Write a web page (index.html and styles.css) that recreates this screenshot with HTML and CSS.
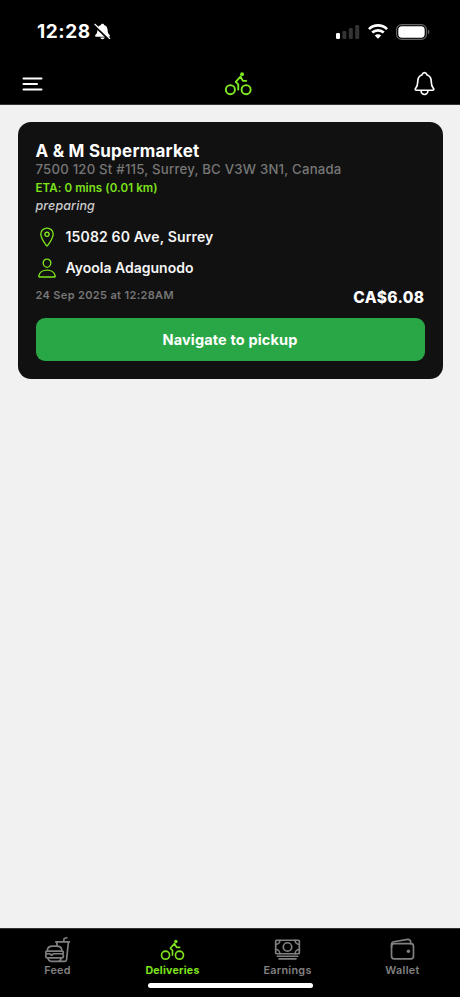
FILE: index.html
```html
<!DOCTYPE html>
<html lang="en">
<head>
<meta charset="utf-8">
<title>Deliveries</title>
<link rel="stylesheet" href="styles.css">
</head>
<body>
<svg class="sprite" width="0" height="0">
  <symbol id="bike" viewBox="0 0 512 512">
    <path d="M388 288a76 76 0 1076 76 76.24 76.24 0 00-76-76zM124 288a76 76 0 1076 76 76.24 76.24 0 00-76-76zM256 360v-86l-42-42 80-88 40 72h56"/>
    <circle class="solid" cx="320" cy="104" r="32"/>
  </symbol>
</svg>
<div class="screen">
  <header class="top">
    <div class="status">
      <span class="time">12:28</span>
      <svg class="muted" viewBox="0 0 18 18"><path d="M9 .8c.9 0 1.5.5 1.7 1.2 2.4.8 3.6 2.6 3.7 5.3.1 2.8.7 3.9 2 5.2.9 1 .5 2-.6 2H2.200c-1.100 0-1.500-1-.6-2 1.300-1.300 1.900-2.400 2-5.200.1-2.700 1.300-4.500 3.700-5.300C7.500 1.300 8.100.8 9 .8zM6.700 15.400h4.600c-.2 1-1.100 1.700-2.300 1.700s-2.100-.7-2.300-1.700z" fill="#fff"/><path d="M.2 2.600l15.600 14.800" stroke="#000" stroke-width="2.200"/><path d="M1 1.300l15.600 15.100" stroke="#fff" stroke-width="1.200" stroke-linecap="round"/></svg>
      <svg class="signal" viewBox="0 0 24 16"><rect y="9" width="4" height="6" rx="1.200" fill="#fff"/><g fill="#333"><rect x="6.400" y="7" width="4" height="8" rx="1.200"/><rect x="12.800" y="4" width="4" height="11" rx="1.200"/><rect x="19.200" y="1" width="4" height="14" rx="1.200"/></g></svg>
      <svg class="wifi" viewBox="0 0 20 15"><g fill="none" stroke="#fff" stroke-width="2.700"><path d="M1 5.100a12.900 12.900 0 0118 0"/><path d="M4.200 8.600a8.400 8.400 0 0111.600 0"/></g><path d="M10 14.800l-3.200-3.300a4.600 4.600 0 016.400 0z" fill="#fff"/></svg>
      <svg class="battery" viewBox="0 0 34 16"><rect x=".6" y=".6" width="29.800" height="14.800" rx="5" fill="none" stroke="#666" stroke-width="1.100"/><rect x="2.300" y="2.300" width="26.400" height="11.400" rx="3.600" fill="#fff"/><path d="M31.800 5.500c2 .7 2 4.300 0 5z" fill="#666"/></svg>
    </div>
    <div class="bar">
      <svg class="menu" viewBox="0 0 20 14"><path d="M1 1.500h18M1 7h13.500M1 12.500h18" stroke="#fff" stroke-width="2" stroke-linecap="round"/></svg>
      <svg class="icon brand"><use href="#bike"/></svg>
      <svg class="icon bell" viewBox="0 0 512 512"><path d="M427.680 351.430C402 320 383.870 304 383.870 217.350 383.870 138 343.350 109.730 310 96c-4.430-1.820-8.600-6-9.950-10.550C294.200 65.540 277.800 48 256 48s-38.210 17.550-44 37.470c-1.350 4.600-5.520 8.710-9.950 10.530-33.390 13.750-73.870 41.920-73.870 121.350C128.130 304 110 320 84.320 351.430 73.680 364.450 83 384 101.610 384h308.880c18.510 0 27.770-19.610 17.190-32.570zM320 384v16a64 64 0 01-128 0v-16"/></svg>
    </div>
  </header>
  <main>
    <article class="card">
      <h1>A &amp; M Supermarket</h1>
      <p class="address">7500 120 St #115, Surrey, BC V3W 3N1, Canada</p>
      <p class="eta">ETA: 0 mins (0.01 km)</p>
      <p class="state">preparing</p>
      <div class="row">
        <svg class="icon" viewBox="0 0 512 512"><path d="M256 48c-79.500 0-144 61.390-144 137 0 87 96 224.870 131.250 272.490a15.770 15.770 0 0025.500 0C304 409.890 400 272.070 400 185c0-75.610-64.500-137-144-137z"/><circle cx="256" cy="192" r="48"/></svg>
        <span class="dropoff">15082 60 Ave, Surrey</span>
      </div>
      <div class="row">
        <svg class="icon" viewBox="0 0 512 512"><path d="M344 144c-3.920 52.870-44 96-88 96s-84.150-43.120-88-96c-4-55 35-96 88-96s92 42 88 96zM256 304c-87 0-175.300 48-191.640 138.600C62.390 453.520 68.570 464 80 464h352c11.440 0 17.620-10.480 15.650-21.400C431.300 352 343 304 256 304z"/></svg>
        <span class="customer">Ayoola Adagunodo</span>
      </div>
      <div class="meta"><span class="date">24 Sep 2025 at 12:28AM</span><span class="price">CA$6.08</span></div>
      <button>Navigate to pickup</button>
    </article>
  </main>
  <footer>
    <nav>
      <a class="tab feed"><svg class="icon" viewBox="0 0 512 512"><path d="M322 416c0 35.350-20.650 64-56 64H134c-35.350 0-56-28.650-56-64M336 336c17.670 0 32 17.910 32 40s-14.330 40-32 40H64c-17.670 0-32-17.910-32-40s14.330-40 32-40M344 336H179.310a8 8 0 00-5.650 2.340l-26.830 26.830a4 4 0 01-5.660 0l-26.830-26.830a8 8 0 00-5.650-2.340H56a24 24 0 01-24-24 24 24 0 0124-24h288a24 24 0 0124 24 24 24 0 01-24 24zM64 276v-.22c0-55 45-83.780 100-83.780h74c55 0 100 29 100 84v-.22M241 112l7.440 63.970M256 480h139.310a32 32 0 0031.910-29.610L463 112M368 112l16-64 48-16M224 112h256"/></svg><span>Feed</span></a>
      <a class="tab active"><svg class="icon"><use href="#bike"/></svg><span>Deliveries</span></a>
      <a class="tab earnings"><svg class="icon" viewBox="0 0 512 512"><rect x="32" y="80" width="448" height="256" rx="16"/><path d="M64 384h384M96 432h320M480 160a80 80 0 01-80-80M32 160a80 80 0 0080-80M480 256a80 80 0 00-80 80M32 256a80 80 0 0180 80"/><circle cx="256" cy="208" r="80"/></svg><span>Earnings</span></a>
      <a class="tab wallet"><svg class="icon" viewBox="0 0 512 512"><rect x="48" y="144" width="416" height="288" rx="48"/><path d="M411.360 144v-30A50 50 0 00352 64.900L88.640 109.850A50 50 0 0048 159v49"/><circle class="solid" cx="368" cy="288" r="32"/></svg><span>Wallet</span></a>
    </nav>
    <div class="home"></div>
  </footer>
</div>
</body>
</html>
```
FILE: styles.css
```css
* { box-sizing: border-box; }
body { margin: 0; background: #f1f1f1; font-family: Inter, "Liberation Sans", sans-serif; }
.sprite { position: absolute; }
.screen { height: 997px; display: flex; flex-direction: column; }
svg { display: block; flex: none; }
.icon { fill: none; stroke: currentColor; stroke-width: 32; stroke-linecap: round; stroke-linejoin: round; }
.solid { fill: currentColor; stroke: none; }

.top { height: 105px; background: #000; border-bottom: 1px solid #333; color: #fff; }
.status { height: 63px; padding: 0 30px 0 37px; display: flex; align-items: center; }
.time { font-size: 19px; font-weight: 700; letter-spacing: 0.6px; }
.muted { width: 17px; height: 17px; margin-left: 3.500px; }
.signal { width: 24px; height: 16px; margin-left: auto; }
.wifi { width: 20px; height: 15px; margin-left: 8px; }
.battery { width: 34px; height: 16px; margin-left: 8px; }
.bar { height: 41px; padding: 0 22px 0 22px; display: grid; grid-template-columns: 1fr 31px 1fr; align-items: center; }
.menu { width: 21px; height: 14px; }
.brand { width: 30.500px; height: 30.500px; color: #7fea22; margin-left: 8.500px; }
.bell { width: 27px; height: 27px; justify-self: end; }

main { flex: 1; padding: 17px 17.500px; }
.card { height: 257px; padding: 18px; border-radius: 13px; background: #111; color: #f5f5f5; }
h1, p { margin: 0; }
h1 { font-size: 17px; line-height: 22px; font-weight: 700; letter-spacing: 0.23px; color: #fff; white-space: nowrap; }
.address { font-size: 13.200px; line-height: 15px; font-weight: 500; color: #777; letter-spacing: 0.21px; white-space: nowrap; }
.eta { margin-top: 3px; font-size: 11.500px; line-height: 16px; font-weight: 600; letter-spacing: 0.1px; color: #7ee31c; }
.state { margin-top: 2px; font-size: 12.500px; line-height: 16px; font-weight: 500; font-style: italic; letter-spacing: 0.1px; color: #ccc; }
.row { height: 22px; display: flex; align-items: center; gap: 8px; margin-top: 12px; font-size: 14px; line-height: 16px; font-weight: 600; }
.row + .row { margin-top: 9px; }
.row .icon { width: 22px; height: 22px; color: #7ee31c; }
.row span { margin-top: -1px; }
.dropoff { letter-spacing: 0.15px; }
.meta { height: 20px; display: flex; justify-content: space-between; margin-top: 6px; }
.date { font-size: 11px; line-height: 20px; font-weight: 600; letter-spacing: 0.35px; color: #777; }
.price { font-size: 15.500px; line-height: 25px; font-weight: 800; letter-spacing: 0.35px; color: #fff; }
button { display: block; width: 100%; height: 43px; margin-top: 13px; padding: 0; border: 0; border-radius: 9px; background: #29a746; color: #fff; font: 700 14.500px/43px Inter, sans-serif; letter-spacing: 0.15px; }

footer { height: 69px; background: #000; border-top: 1px solid #333; }
nav { height: 54px; display: grid; grid-template-columns: repeat(4, 1fr); }
.tab { display: flex; flex-direction: column; align-items: center; padding-top: 7px; color: #808080; font-size: 10.800px; line-height: 16px; font-weight: 600; letter-spacing: 0.3px; }
.tab .icon { width: 27px; height: 27px; }
.active { color: #7ee31c; }
.tab.active span { font-size: 10.600px; font-weight: 700; letter-spacing: 0.25px; }
.home { width: 165px; height: 5px; margin: 0 auto; border-radius: 3px; background: #fff; }
```
